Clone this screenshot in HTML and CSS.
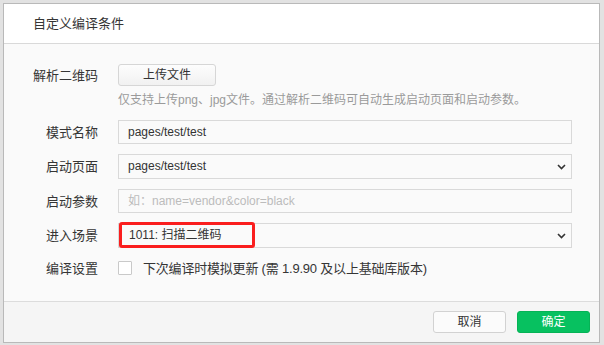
FILE: index.html
```html
<!DOCTYPE html>
<html lang="zh-CN">
<head>
<meta charset="utf-8">
<title>自定义编译条件</title>
<link rel="stylesheet" href="styles.css">
</head>
<body>
<div class="dialog">
  <div class="dlg-head"><span class="title">自定义编译条件</span></div>
  <div class="dlg-body">
    <div class="row">
      <div class="label">解析二维码</div>
      <button class="btn-upload">上传文件</button>
    </div>
    <div class="row hint-row">
      <div class="label"></div>
      <div class="hint">仅支持上传png、jpg文件。通过解析二维码可自动生成启动页面和启动参数。</div>
    </div>
    <div class="row after-hint">
      <div class="label">模式名称</div>
      <div class="field">pages/test/test</div>
    </div>
    <div class="row">
      <div class="label">启动页面</div>
      <div class="field select">pages/test/test
        <svg class="chev" width="9" height="6" viewBox="0 0 9 6"><path d="M1 1l3.5 3.5L8 1" fill="none" stroke="#333" stroke-width="1.6"/></svg>
      </div>
    </div>
    <div class="row">
      <div class="label">启动参数</div>
      <div class="field placeholder">如：name=vendor&amp;color=black</div>
    </div>
    <div class="row">
      <div class="label">进入场景</div>
      <div class="field select scene">1011: 扫描二维码
        <svg class="chev" width="9" height="6" viewBox="0 0 9 6"><path d="M1 1l3.5 3.5L8 1" fill="none" stroke="#333" stroke-width="1.6"/></svg>
        <span class="mark"></span>
      </div>
    </div>
    <div class="row check-row">
      <div class="label">编译设置</div>
      <span class="checkbox"></span>
      <span class="check-text">下次编译时模拟更新 (需 1.9.90 及以上基础库版本)</span>
    </div>
  </div>
  <div class="dlg-foot">
    <button class="btn">取消</button>
    <button class="btn primary">确定</button>
  </div>
</div>
</body>
</html>
```

FILE: styles.css
```css
* { box-sizing: border-box; }
html, body { margin: 0; padding: 0; }
body {
  width: 604px;
  height: 345px;
  overflow: hidden;
  background: #e2e2e2;
  font-family: "Liberation Sans", "Noto Sans CJK SC", sans-serif;
  color: #333;
  padding: 3px 0 0 3px;
}
.dialog {
  width: 597px;
  height: 340px;
  border: 1px solid #b9b9b9;
  background: #fafafa;
  display: flex;
  flex-direction: column;
}
.dlg-head {
  height: 40px;
  flex: none;
  display: flex;
  align-items: center;
  background: #fff;
  border-bottom: 1px solid #d9d9d9;
  padding: 0 0 0 29px;
}
.title {
  font-size: 13px;
  line-height: 17px;
  color: #353535;
}
.dlg-body {
  flex: 1;
  padding: 20px 27px 0 0;
  background: #fafafa;
}
.row {
  display: flex;
  align-items: center;
  font-size: 13px;
}
.row + .row { margin-top: 10px; }
.row.hint-row { margin-top: 6px; }
.row.after-hint { margin-top: 11px; }
.label {
  width: 94px;
  flex: none;
  margin-right: 20px;
  text-align: right;
  color: #353535;
  font-size: 13px;
  line-height: 17px;
}
.btn-upload {
  width: 98px;
  height: 22px;
  border: 1px solid #d6d6d6;
  border-radius: 3px;
  background: linear-gradient(#fdfdfd, #f1f1f1);
  font-family: inherit;
  font-size: 12px;
  color: #333;
  padding: 0;
  line-height: 20px;
}
.hint {
  font-size: 12px;
  line-height: 17px;
  color: #9a9a9a;
}
.field {
  position: relative;
  flex: 1;
  height: 24px;
  border: 1px solid #d9d9d9;
  background: #fafafa;
  padding-left: 9px;
  font-size: 12px;
  line-height: 22px;
  color: #333;
}
.field.select { height: 25px; line-height: 23px; }
.field.placeholder { color: #bcbcbc; }
.field.scene { padding-left: 10px; }
.chev {
  position: absolute;
  right: 5px;
  top: 9px;
}
.mark {
  position: absolute;
  left: 0;
  top: -2px;
  width: 136px;
  height: 26px;
  border: 3px solid #fa1e1e;
  border-radius: 3px;
}
.check-row { height: 20px; }
.checkbox {
  width: 14px;
  height: 14px;
  flex: none;
  border: 1px solid #c9c9c9;
  background: #fff;
  border-radius: 1px;
  margin-right: 11px;
}
.check-text {
  font-size: 13px;
  line-height: 17px;
  color: #353535;
  letter-spacing: -0.2px;
}
.dlg-foot {
  height: 41px;
  flex: none;
  border-top: 1px solid #dcdcdc;
  background: #f5f5f5;
  display: flex;
  align-items: center;
  justify-content: flex-end;
  gap: 11px;
  padding-right: 9px;
}
.btn {
  width: 73px;
  height: 22px;
  border: 1px solid #d2d2d2;
  border-radius: 3px;
  background: #fbfbfb;
  font-family: inherit;
  font-size: 12px;
  color: #333;
  padding: 0;
  line-height: 20px;
}
.btn.primary {
  background: #07c160;
  border-color: #06b356;
  color: #fff;
}
```
